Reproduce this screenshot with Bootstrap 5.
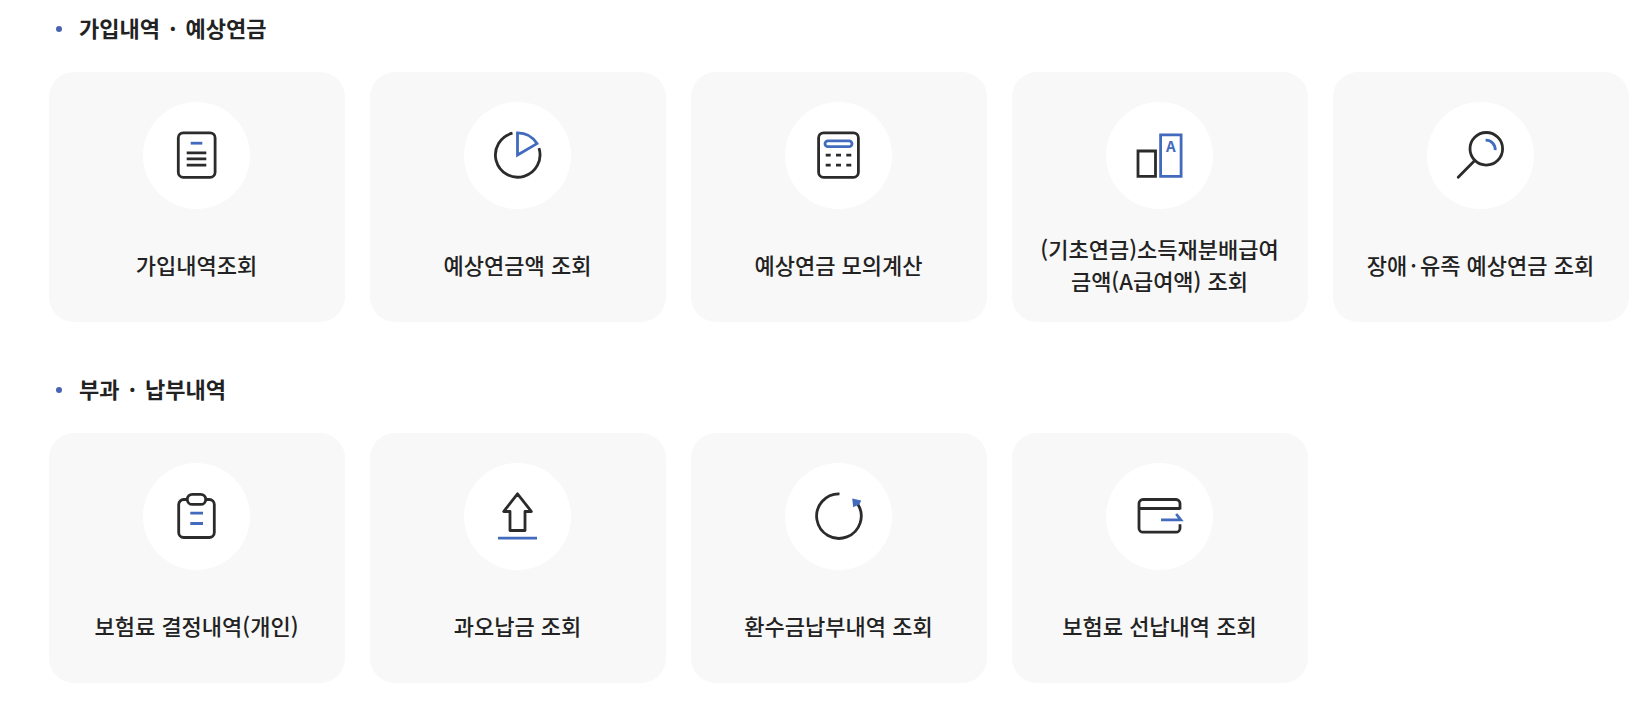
<!DOCTYPE html>
<html lang="ko">
<head>
<meta charset="utf-8">
<meta name="viewport" content="width=device-width, initial-scale=1">
<title>가입내역 · 예상연금</title>
<link href="https://cdn.jsdelivr.net/npm/bootstrap@5.3.0/dist/css/bootstrap.min.css" rel="stylesheet">
<style>
  body { font-family: "Noto Sans CJK KR", "Noto Sans", sans-serif; font-size: 22px; line-height: 32px; color: #222; }
  .page { padding: 11px 12px 28px 49px; }
  .menu-group + .menu-group { margin-top: 50px; }
  .group-title { gap: 17px; padding-left: 7px; margin-bottom: 29px; font-size: 22px; line-height: 32px; font-weight: 700; }
  .bullet { width: 6px; height: 6px; background: #4a62b3; }
  .tiles { --bs-gutter-x: 25px; --bs-gutter-y: 25px; }
  .tile { padding: 30px 24px 26px 23px; border-radius: 25px; background: #f8f8f8; color: #222; font-weight: 500; word-break: keep-all; }
  .tile:hover { background: #f0f2f8; }
  .tile-icon { width: 107px; height: 107px; margin-bottom: 23px; }
  .tile-label { min-height: 64px; }
  .mid-dot { margin: 0 3px; }
  .tile-icon svg { width: 60px; height: 60px; margin-bottom: 1px; fill: none; stroke: #2b2b2b; stroke-width: 2.8; }
  .tile-icon .blue { stroke: #426bbd; }
  .tile-icon .blue-fill { fill: #426bbd; stroke: none; }
  .tile-icon text { font: 700 15px "Noto Sans CJK KR", sans-serif; text-anchor: middle; }
</style>
</head>
<body>
<main class="container-fluid page">
  <section class="menu-group">
    <h2 class="group-title d-flex align-items-center"><span class="bullet rounded-circle mt-1"></span><span>가입내역 <span class="mid-dot">·</span> 예상연금</span></h2>
    <div class="row row-cols-1 row-cols-sm-2 row-cols-md-3 row-cols-xl-5 tiles">
      <div class="col"><a href="#" class="tile h-100 d-flex flex-column align-items-center text-center text-decoration-none">
        <span class="tile-icon rounded-circle bg-white d-flex align-items-center justify-content-center"><svg viewBox="0 0 60 60" aria-hidden="true"><rect x="11.3" y="7.8" width="36.8" height="44.5" rx="5"/><path d="M19.7 27.8h19.6M19.7 33.9h19.6M19.7 40.1h19.6"/><path class="blue" d="M23.7 18.2h11.6"/></svg></span>
        <span class="tile-label d-flex align-items-center">가입내역조회</span></a></div>
      <div class="col"><a href="#" class="tile h-100 d-flex flex-column align-items-center text-center text-decoration-none">
        <span class="tile-icon rounded-circle bg-white d-flex align-items-center justify-content-center"><svg viewBox="0 0 60 60" aria-hidden="true"><path d="M24.5 8.2A22.3 22.3 0 1 0 51 23.2"/><path class="blue" d="M29.5 7.8V30L49 18.6C45 12 38 7.8 29.5 7.8Z"/></svg></span>
        <span class="tile-label d-flex align-items-center">예상연금액 조회</span></a></div>
      <div class="col"><a href="#" class="tile h-100 d-flex flex-column align-items-center text-center text-decoration-none">
        <span class="tile-icon rounded-circle bg-white d-flex align-items-center justify-content-center"><svg viewBox="0 0 60 60" aria-hidden="true"><rect x="9.6" y="7.8" width="39.8" height="44.5" rx="5"/><rect class="blue" x="16" y="15.8" width="27" height="5.8" rx="2.9"/><path d="M16.7 30.2h5M27 30.2h5M37.3 30.2h5M16.7 40.2h5M27 40.2h5M37.3 40.2h5"/></svg></span>
        <span class="tile-label d-flex align-items-center">예상연금 모의계산</span></a></div>
      <div class="col"><a href="#" class="tile h-100 d-flex flex-column align-items-center text-center text-decoration-none">
        <span class="tile-icon rounded-circle bg-white d-flex align-items-center justify-content-center"><svg viewBox="0 0 60 60" aria-hidden="true"><path d="M8 26h17.5v25.3H8Z"/><path class="blue" d="M30.6 9.8h20.5v41.5H30.6Z"/><text class="blue-fill" x="40.7" y="26.8">A</text></svg></span>
        <span class="tile-label d-flex align-items-center">(기초연금)소득재분배급여<br>금액(A급여액) 조회</span></a></div>
      <div class="col"><a href="#" class="tile h-100 d-flex flex-column align-items-center text-center text-decoration-none">
        <span class="tile-icon rounded-circle bg-white d-flex align-items-center justify-content-center"><svg viewBox="0 0 60 60" aria-hidden="true"><circle cx="35.3" cy="23.8" r="16.3"/><path stroke-linecap="round" d="M23.5 35.8L7.2 52.2"/><path class="blue" d="M34.6 15.2A9.4 9.4 0 0 1 44.2 25.2"/></svg></span>
        <span class="tile-label d-flex align-items-center"><span>장애<span class="mid-dot">·</span>유족 예상연금 조회</span></span></a></div>
    </div>
  </section>

  <section class="menu-group">
    <h2 class="group-title d-flex align-items-center"><span class="bullet rounded-circle mt-1"></span><span>부과 <span class="mid-dot">·</span> 납부내역</span></h2>
    <div class="row row-cols-1 row-cols-sm-2 row-cols-md-3 row-cols-xl-5 tiles">
      <div class="col"><a href="#" class="tile h-100 d-flex flex-column align-items-center text-center text-decoration-none">
        <span class="tile-icon rounded-circle bg-white d-flex align-items-center justify-content-center"><svg viewBox="0 0 60 60" aria-hidden="true"><path d="M20.3 13.5h-3.6a5 5 0 0 0-5 5v28a5 5 0 0 0 5 5h25.6a5 5 0 0 0 5-5v-28a5 5 0 0 0-5-5h-3.6"/><rect x="20.3" y="8.4" width="18.4" height="10" rx="5"/><path class="blue" d="M23.3 27.2H36M23.3 37.5H36"/></svg></span>
        <span class="tile-label d-flex align-items-center">보험료 결정내역(개인)</span></a></div>
      <div class="col"><a href="#" class="tile h-100 d-flex flex-column align-items-center text-center text-decoration-none">
        <span class="tile-icon rounded-circle bg-white d-flex align-items-center justify-content-center"><svg viewBox="0 0 60 60" aria-hidden="true"><path stroke-linejoin="round" d="M29.5 7.8L15.7 25.5H22v19h15v-19h6.4Z"/><path class="blue" d="M10 52.2h39"/></svg></span>
        <span class="tile-label d-flex align-items-center">과오납금 조회</span></a></div>
      <div class="col"><a href="#" class="tile h-100 d-flex flex-column align-items-center text-center text-decoration-none">
        <span class="tile-icon rounded-circle bg-white d-flex align-items-center justify-content-center"><svg viewBox="0 0 60 60" aria-hidden="true"><path d="M30.5 7.8A22.3 22.3 0 1 0 48.8 18.2"/><path class="blue-fill" d="M43.2 12.6L52.2 14.6L50.5 18.2L44.2 21.2Z"/></svg></span>
        <span class="tile-label d-flex align-items-center">환수금납부내역 조회</span></a></div>
      <div class="col"><a href="#" class="tile h-100 d-flex flex-column align-items-center text-center text-decoration-none">
        <span class="tile-icon rounded-circle bg-white d-flex align-items-center justify-content-center"><svg viewBox="0 0 60 60" aria-hidden="true"><path d="M50 23.5v-6a4 4 0 0 0-4-4H13a4 4 0 0 0-4 4v24.7a4 4 0 0 0 4 4h33a4 4 0 0 0 4-4v-4M9 22.5h41"/><path class="blue" d="M31 33.8h19.8l-4.6-5.8"/></svg></span>
        <span class="tile-label d-flex align-items-center">보험료 선납내역 조회</span></a></div>
    </div>
  </section>
</main>
<script src="https://cdn.jsdelivr.net/npm/bootstrap@5.3.0/dist/js/bootstrap.bundle.min.js"></script>
</body>
</html>
